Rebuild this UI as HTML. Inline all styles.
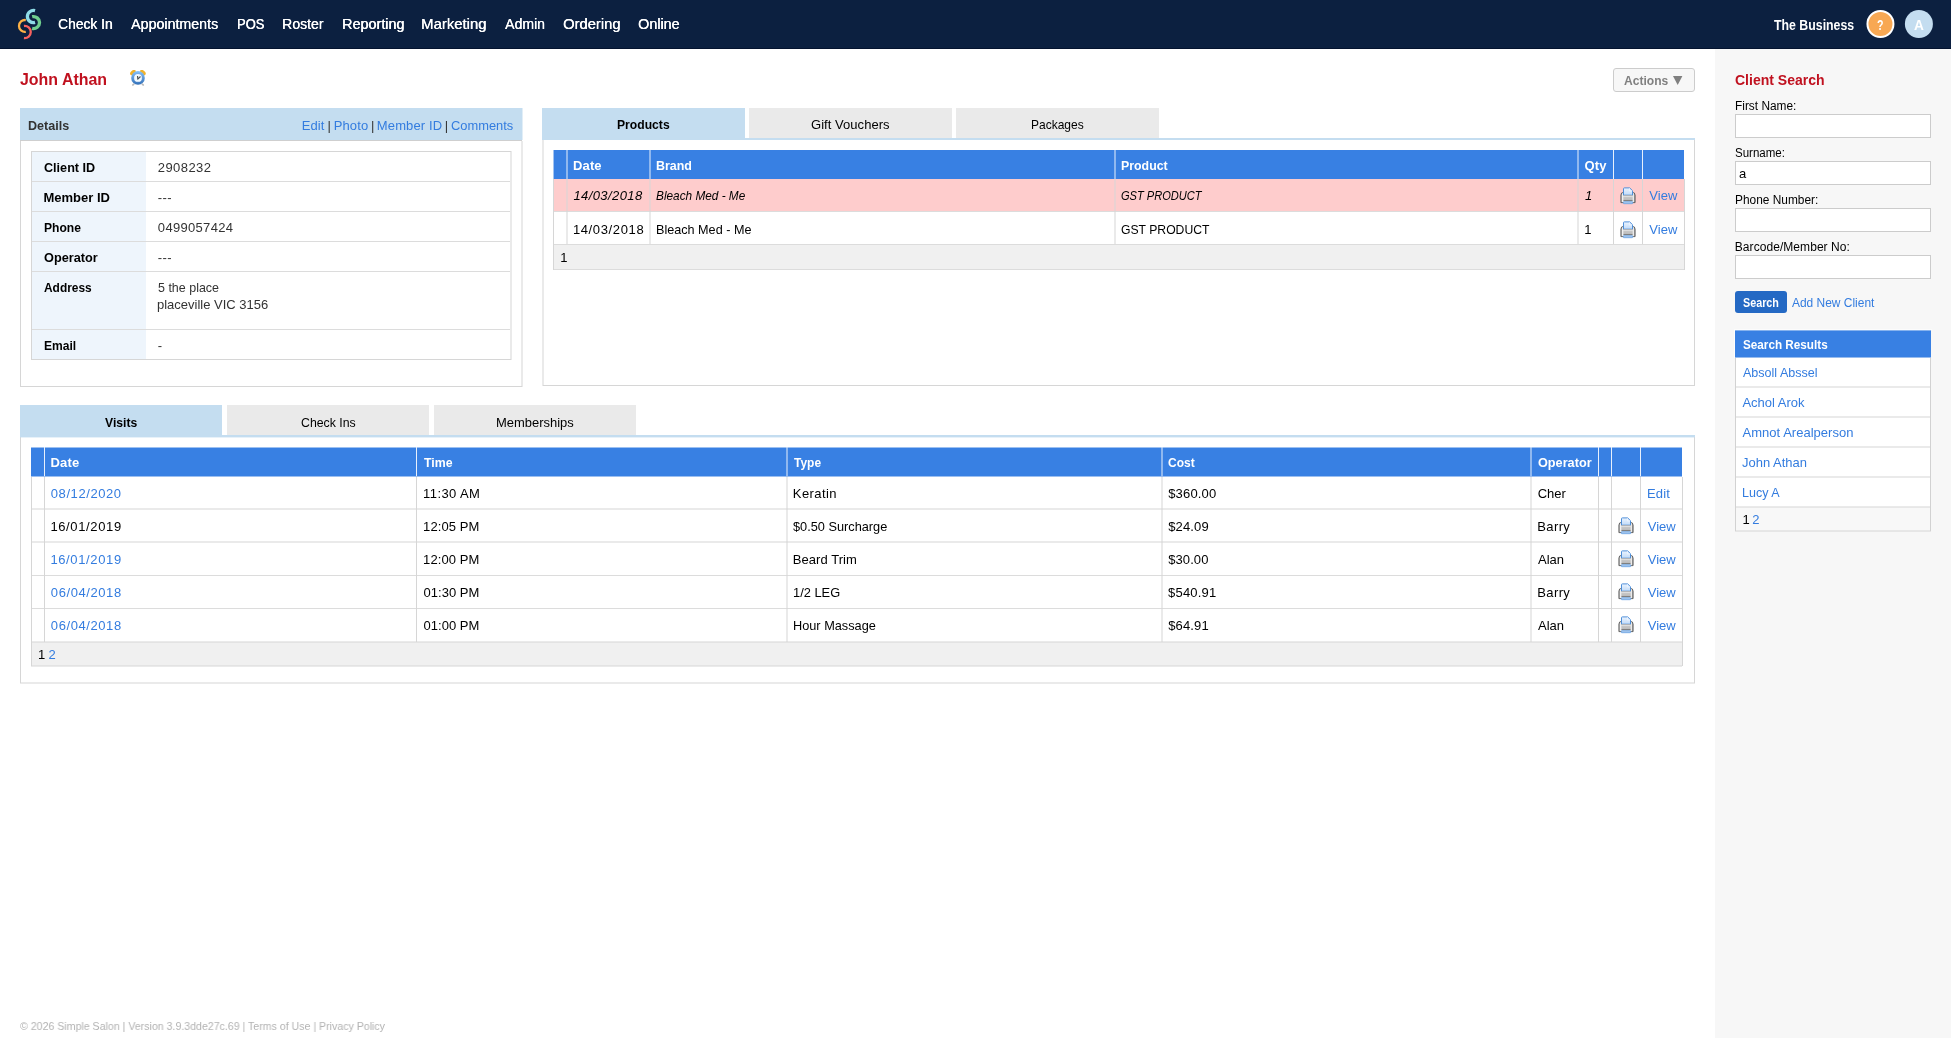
<!DOCTYPE html>
<html><head><meta charset="utf-8"><title>Client</title>
<style>
html,body{margin:0;padding:0;background:#fff;}
body{width:1951px;height:1038px;position:relative;overflow:hidden;font-family:"Liberation Sans",sans-serif;}
#w{position:absolute;left:0;top:0;width:1951px;height:1038px;will-change:transform;}
#w>div,#w>span,#w>svg{position:absolute;box-sizing:content-box;}
#w>span{white-space:nowrap;line-height:20px;transform-origin:0 0;}

</style></head><body><div id="w">
<div style="left:0px;top:0px;width:1951px;height:48px;background:#0c2040;"></div>
<div style="left:0px;top:48px;width:1951px;height:1px;background:#04132f;"></div>
<svg style="left:10px;top:4px" width="40" height="40" viewBox="0 0 40 40" fill="none">
<path d="M25.04 6.62 A6.1 6.1 0 1 0 25.04 18.42" stroke="#8fdce7" stroke-width="3.3"/>
<path d="M22.16 12.73 A6 6 0 1 1 22.16 24.41" stroke="#70cf8f" stroke-width="3.3"/>
<path d="M15.8 16.06 A5.97 5.97 0 1 0 15.8 27.88" stroke="#fcb146" stroke-width="2.3"/>
<path d="M13.95 22.0 A6.05 6.05 0 1 1 13.95 34.0" stroke="#f8615f" stroke-width="2.3"/>
</svg>
<span style="left:57.96px;top:14px;font-size:15px;color:#fff;transform:scaleX(0.9208);text-shadow:0.35px 0 0 #fff;">Check In</span>
<span style="left:130.92px;top:14px;font-size:15px;color:#fff;transform:scaleX(0.9487);text-shadow:0.35px 0 0 #fff;">Appointments</span>
<span style="left:236.60px;top:14px;font-size:15px;color:#fff;transform:scaleX(0.8589);text-shadow:0.35px 0 0 #fff;">POS</span>
<span style="left:282.08px;top:14px;font-size:15px;color:#fff;transform:scaleX(0.9350);text-shadow:0.35px 0 0 #fff;">Roster</span>
<span style="left:341.50px;top:14px;font-size:15px;color:#fff;transform:scaleX(0.9578);text-shadow:0.35px 0 0 #fff;">Reporting</span>
<span style="left:421.27px;top:14px;font-size:15px;color:#fff;transform:scaleX(0.9924);text-shadow:0.35px 0 0 #fff;">Marketing</span>
<span style="left:505.11px;top:14px;font-size:15px;color:#fff;transform:scaleX(0.9372);text-shadow:0.35px 0 0 #fff;">Admin</span>
<span style="left:562.94px;top:14px;font-size:15px;color:#fff;transform:scaleX(0.9823);text-shadow:0.35px 0 0 #fff;">Ordering</span>
<span style="left:638.14px;top:14px;font-size:15px;color:#fff;transform:scaleX(0.9568);text-shadow:0.35px 0 0 #fff;">Online</span>
<span style="left:1773.76px;top:15px;font-size:15px;color:#fff;font-weight:bold;transform:scaleX(0.8222);">The Business</span>
<svg style="left:1860px;top:4px" width="80" height="40" viewBox="0 0 80 40"><circle cx="20.45" cy="20" r="13" fill="#f8a853" stroke="#fff" stroke-width="2"/><circle cx="58.9" cy="20" r="14" fill="#c4ddf0"/></svg>
<span style="left:1876.74px;top:15px;font-size:15px;color:#fff;font-weight:bold;transform:scaleX(0.7101);">?</span>
<span style="left:1913.93px;top:15px;font-size:15px;color:#fff;font-weight:bold;transform:scaleX(0.9106);">A</span>
<div style="left:1715px;top:49px;width:236px;height:989px;background:#f7f7f7;"></div>
<span style="left:20.21px;top:70px;font-size:17px;color:#c0111f;font-weight:bold;transform:scaleX(0.9373);">John Athan</span>
<svg style="left:130px;top:70px" width="16" height="16" viewBox="0 0 16 16">
<defs><linearGradient id="cg" x1="0" y1="0" x2="0" y2="1"><stop offset="0" stop-color="#86c2fa"/><stop offset="1" stop-color="#3270b8"/></linearGradient></defs>
<ellipse cx="2.9" cy="2.5" rx="3.3" ry="2" transform="rotate(-42 2.9 2.5)" fill="#f0b22c"/>
<ellipse cx="12.9" cy="2.5" rx="3.3" ry="2" transform="rotate(42 12.9 2.5)" fill="#f0b22c"/>
<ellipse cx="3.3" cy="14.6" rx="1.5" ry="0.9" transform="rotate(-40 3.3 14.6)" fill="#b9b9b9"/>
<ellipse cx="12.8" cy="14.6" rx="1.5" ry="0.9" transform="rotate(40 12.8 14.6)" fill="#b9b9b9"/>
<circle cx="8" cy="7.9" r="6.8" fill="url(#cg)"/>
<circle cx="8" cy="7.9" r="4.4" fill="#7f9bd8" opacity="0.55"/>
<circle cx="8" cy="7.9" r="3.9" fill="#f1faff"/>
<path d="M7.55 6.0 L7.8 9.2 L10.5 6.5" stroke="#4d5256" stroke-width="1.15" fill="none" stroke-linejoin="round"/>
</svg>
<div style="left:1613px;top:68px;width:80px;height:22px;border:1px solid #ccc;border-radius:3px;background:#f7f7f7;"></div>
<span style="left:1624.08px;top:71px;font-size:13px;color:#808080;font-weight:bold;transform:scaleX(0.9298);">Actions</span>
<svg style="left:1673px;top:76px" width="10" height="10" viewBox="0 0 10 10"><path d="M0 0 H9.4 L4.7 9 Z" fill="#808080"/></svg>
<div style="left:20px;top:141px;width:1px;height:246px;background:#d6d6d6;"></div>
<div style="left:521px;top:141px;width:2px;height:246px;background:#d6d6d6;opacity:0.5;"></div>
<div style="left:20px;top:386px;width:502px;height:1px;background:#d6d6d6;"></div>
<div style="left:20px;top:108px;width:502px;height:32px;background:#c4ddf0;"></div>
<div style="left:522px;top:108px;width:1px;height:32px;background:#c4ddf0;opacity:0.5;"></div>
<div style="left:20px;top:140px;width:502px;height:1px;background:#cfcfcf;"></div>
<span style="left:27.61px;top:116px;font-size:13px;color:#333;font-weight:bold;transform:scaleX(0.9666);">Details</span>
<span style="left:301.67px;top:116px;font-size:13px;color:#337cdf;letter-spacing:0.088px;">Edit</span>
<span style="left:327.56px;top:116px;font-size:13px;color:#333;">|</span>
<span style="left:333.67px;top:116px;font-size:13px;color:#337cdf;letter-spacing:0.151px;">Photo</span>
<span style="left:371.01px;top:116px;font-size:13px;color:#333;">|</span>
<span style="left:376.84px;top:116px;font-size:13px;color:#337cdf;letter-spacing:0.134px;">Member ID</span>
<span style="left:444.84px;top:116px;font-size:13px;color:#333;">|</span>
<span style="left:451.28px;top:116px;font-size:13px;color:#337cdf;transform:scaleX(0.9906);">Comments</span>
<div style="left:31px;top:151px;width:480px;height:1px;background:#d6d6d6;"></div>
<div style="left:31px;top:359px;width:480px;height:1px;background:#d6d6d6;"></div>
<div style="left:31px;top:151px;width:1px;height:209px;background:#d6d6d6;"></div>
<div style="left:510px;top:151px;width:2px;height:209px;background:#d6d6d6;opacity:0.5;"></div>
<div style="left:32px;top:152px;width:114px;height:207px;background:#eef5fc;"></div>
<div style="left:32px;top:181px;width:478px;height:1px;background:#dcdcdc;"></div>
<div style="left:32px;top:211px;width:478px;height:1px;background:#dcdcdc;"></div>
<div style="left:32px;top:241px;width:478px;height:1px;background:#dcdcdc;"></div>
<div style="left:32px;top:271px;width:478px;height:1px;background:#dcdcdc;"></div>
<div style="left:32px;top:329px;width:478px;height:1px;background:#dcdcdc;"></div>
<span style="left:43.75px;top:158px;font-size:13px;color:#000;font-weight:bold;transform:scaleX(0.9705);">Client ID</span>
<span style="left:157.80px;top:158px;font-size:13px;color:#333;letter-spacing:0.420px;">2908232</span>
<span style="left:43.43px;top:188px;font-size:13px;color:#000;font-weight:bold;letter-spacing:0.016px;">Member ID</span>
<span style="left:157.77px;top:188px;font-size:13px;color:#333;letter-spacing:0.466px;">---</span>
<span style="left:43.83px;top:218px;font-size:13px;color:#000;font-weight:bold;transform:scaleX(0.9307);">Phone</span>
<span style="left:157.87px;top:218px;font-size:13px;color:#333;letter-spacing:0.312px;">0499057424</span>
<span style="left:43.83px;top:248px;font-size:13px;color:#000;font-weight:bold;transform:scaleX(0.9790);">Operator</span>
<span style="left:157.77px;top:248px;font-size:13px;color:#333;letter-spacing:0.466px;">---</span>
<span style="left:44.26px;top:278px;font-size:13px;color:#000;font-weight:bold;transform:scaleX(0.9170);">Address</span>
<span style="left:157.93px;top:278px;font-size:13px;color:#333;transform:scaleX(0.9593);">5 the place</span>
<span style="left:43.69px;top:336px;font-size:13px;color:#000;font-weight:bold;transform:scaleX(0.9286);">Email</span>
<span style="left:157.86px;top:336px;font-size:13px;color:#333;">-</span>
<span style="left:157.28px;top:295px;font-size:13px;color:#333;transform:scaleX(0.9989);">placeville VIC 3156</span>
<div style="left:542px;top:140px;width:2px;height:246px;background:#d6d6d6;opacity:0.5;"></div>
<div style="left:1694px;top:140px;width:1px;height:246px;background:#d6d6d6;"></div>
<div style="left:543px;top:385px;width:1152px;height:1px;background:#d6d6d6;"></div>
<div style="left:542px;top:108px;width:203px;height:32px;background:#c4ddf0;"></div>
<span style="left:616.92px;top:115px;font-size:13px;color:#000;font-weight:bold;transform:scaleX(0.9344);">Products</span>
<div style="left:749px;top:108px;width:203px;height:30px;background:#eaeaea;"></div>
<span style="left:811.04px;top:115px;font-size:13px;color:#000;letter-spacing:0.040px;">Gift Vouchers</span>
<div style="left:956px;top:108px;width:203px;height:30px;background:#eaeaea;"></div>
<span style="left:1030.58px;top:115px;font-size:13px;color:#000;transform:scaleX(0.9236);">Packages</span>
<div style="left:542px;top:138px;width:1153px;height:2px;background:#c4ddf0;"></div>
<svg width="0" height="0" style="left:0;top:0"><defs>
<linearGradient id="pg" x1="0" y1="0" x2="1" y2="0"><stop offset="0" stop-color="#9a9a9a"/><stop offset="0.12" stop-color="#f6f6f6"/><stop offset="0.3" stop-color="#c9c9c9"/><stop offset="0.7" stop-color="#c4c4c4"/><stop offset="0.88" stop-color="#f2f2f2"/><stop offset="1" stop-color="#7a7a7a"/></linearGradient>
<linearGradient id="pp" x1="0" y1="0" x2="0" y2="1"><stop offset="0" stop-color="#eaf3fe"/><stop offset="1" stop-color="#c2dbf8"/></linearGradient>
<linearGradient id="pt" x1="0" y1="0" x2="0" y2="1"><stop offset="0" stop-color="#9c9c9c"/><stop offset="0.18" stop-color="#e4e4e4"/><stop offset="0.35" stop-color="#c6c6c6"/><stop offset="0.7" stop-color="#bdbdbd"/><stop offset="0.85" stop-color="#7d7d7d"/><stop offset="1" stop-color="#efefef"/></linearGradient>
</defs></svg>
<div style="left:553px;top:150px;width:1131px;height:29px;background:#3880e3;"></div>
<div style="left:553px;top:150px;width:1px;height:29px;background:#e8f0fc;opacity:0.6;"></div>
<div style="left:566px;top:150px;width:2px;height:29px;background:#e8f0fc;opacity:0.5;"></div>
<div style="left:649px;top:150px;width:2px;height:29px;background:#e8f0fc;opacity:0.5;"></div>
<div style="left:1114px;top:150px;width:2px;height:29px;background:#e8f0fc;opacity:0.5;"></div>
<div style="left:1577px;top:150px;width:2px;height:29px;background:#e8f0fc;opacity:0.5;"></div>
<div style="left:1613px;top:150px;width:1px;height:29px;background:#e8f0fc;"></div>
<div style="left:1642px;top:150px;width:1px;height:29px;background:#e8f0fc;"></div>
<div style="left:553px;top:179px;width:1131px;height:32px;background:#fecccc;"></div>
<div style="left:553px;top:245px;width:1131px;height:24px;background:#f0f0f0;"></div>
<div style="left:553px;top:211px;width:1131px;height:1px;background:#dcdcdc;"></div>
<div style="left:553px;top:244px;width:1131px;height:1px;background:#dcdcdc;"></div>
<div style="left:553px;top:269px;width:1131px;height:1px;background:#dcdcdc;"></div>
<div style="left:566px;top:179px;width:2px;height:65px;background:#d6d6d6;opacity:0.5;"></div>
<div style="left:649px;top:179px;width:2px;height:65px;background:#d6d6d6;opacity:0.5;"></div>
<div style="left:1114px;top:179px;width:2px;height:65px;background:#d6d6d6;opacity:0.5;"></div>
<div style="left:1577px;top:179px;width:2px;height:65px;background:#d6d6d6;opacity:0.5;"></div>
<div style="left:1613px;top:179px;width:1px;height:65px;background:#d6d6d6;"></div>
<div style="left:1642px;top:179px;width:1px;height:65px;background:#d6d6d6;"></div>
<div style="left:553px;top:179px;width:1px;height:91px;background:#d6d6d6;"></div>
<div style="left:1684px;top:179px;width:1px;height:91px;background:#d6d6d6;"></div>
<span style="left:573.12px;top:156px;font-size:13px;color:#fff;font-weight:bold;letter-spacing:0.076px;">Date</span>
<span style="left:655.79px;top:156px;font-size:13px;color:#fff;font-weight:bold;transform:scaleX(0.9580);">Brand</span>
<span style="left:1120.84px;top:156px;font-size:13px;color:#fff;font-weight:bold;transform:scaleX(0.9504);">Product</span>
<span style="left:1584.53px;top:156px;font-size:13px;color:#fff;font-weight:bold;letter-spacing:0.124px;">Qty</span>
<span style="left:573.45px;top:186px;font-size:13px;color:#000;font-style:italic;letter-spacing:0.406px;">14/03/2018</span>
<span style="left:656.03px;top:186px;font-size:13px;color:#000;font-style:italic;transform:scaleX(0.9083);">Bleach Med - Me</span>
<span style="left:1121.07px;top:186px;font-size:13px;color:#000;font-style:italic;transform:scaleX(0.8516);">GST PRODUCT</span>
<span style="left:1584.98px;top:186px;font-size:13px;color:#000;font-style:italic;">1</span>
<svg style="left:1620px;top:187.5px;overflow:visible" width="16" height="16" viewBox="0 0 16 16">
<path d="M0.9 14.6 V7.2 Q0.9 4.3 3.7 4.3 H12.3 Q15.1 4.3 15.1 7.2 V14.6 Z" fill="url(#pg)" stroke="#4c4c4c" stroke-width="0.8"/>
<path d="M3.5 7.2 V0.7 Q3.5 -0.1 4.3 -0.1 H9.7 L12.5 2.7 V7.2 Z" fill="url(#pp)" stroke="#4f8fd9" stroke-width="1" stroke-linejoin="round"/>
<path d="M9.4 0.3 V3.0 H12.1" fill="none" stroke="#eef5ff" stroke-width="0.8"/>
<rect x="3.4" y="7.1" width="9.2" height="6.4" fill="url(#pt)"/>
<rect x="3.3" y="13.7" width="9.4" height="2" rx="0.5" fill="#a9c9ee" stroke="#5d9ce2" stroke-width="0.7"/>
</svg>
<span style="left:1649.26px;top:186px;font-size:13px;color:#337cdf;letter-spacing:0.066px;">View</span>
<span style="left:572.91px;top:220px;font-size:13px;color:#000;letter-spacing:0.628px;">14/03/2018</span>
<span style="left:655.64px;top:220px;font-size:13px;color:#000;transform:scaleX(0.9710);">Bleach Med - Me</span>
<span style="left:1121.12px;top:220px;font-size:13px;color:#000;transform:scaleX(0.9372);">GST PRODUCT</span>
<span style="left:1584.26px;top:220px;font-size:13px;color:#000;">1</span>
<svg style="left:1620px;top:221.5px;overflow:visible" width="16" height="16" viewBox="0 0 16 16">
<path d="M0.9 14.6 V7.2 Q0.9 4.3 3.7 4.3 H12.3 Q15.1 4.3 15.1 7.2 V14.6 Z" fill="url(#pg)" stroke="#4c4c4c" stroke-width="0.8"/>
<path d="M3.5 7.2 V0.7 Q3.5 -0.1 4.3 -0.1 H9.7 L12.5 2.7 V7.2 Z" fill="url(#pp)" stroke="#4f8fd9" stroke-width="1" stroke-linejoin="round"/>
<path d="M9.4 0.3 V3.0 H12.1" fill="none" stroke="#eef5ff" stroke-width="0.8"/>
<rect x="3.4" y="7.1" width="9.2" height="6.4" fill="url(#pt)"/>
<rect x="3.3" y="13.7" width="9.4" height="2" rx="0.5" fill="#a9c9ee" stroke="#5d9ce2" stroke-width="0.7"/>
</svg>
<span style="left:1649.26px;top:220px;font-size:13px;color:#337cdf;letter-spacing:0.066px;">View</span>
<span style="left:560.26px;top:248px;font-size:13px;color:#000;">1</span>
<div style="left:20px;top:437px;width:1px;height:246px;background:#d6d6d6;"></div>
<div style="left:1694px;top:437px;width:1px;height:246px;background:#d6d6d6;"></div>
<div style="left:20px;top:682px;width:1675px;height:2px;background:#d6d6d6;opacity:0.5;"></div>
<div style="left:20px;top:405px;width:202px;height:32px;background:#c4ddf0;"></div>
<span style="left:105.41px;top:413px;font-size:13px;color:#000;font-weight:bold;transform:scaleX(0.9360);">Visits</span>
<div style="left:227px;top:405px;width:202px;height:30px;background:#eaeaea;"></div>
<span style="left:300.82px;top:413px;font-size:13px;color:#000;transform:scaleX(0.9461);">Check Ins</span>
<div style="left:434px;top:405px;width:202px;height:30px;background:#eaeaea;"></div>
<span style="left:495.85px;top:413px;font-size:13px;color:#000;transform:scaleX(0.9969);">Memberships</span>
<div style="left:20px;top:435px;width:1675px;height:2px;background:#c4ddf0;"></div>
<div style="left:20px;top:437px;width:1675px;height:1px;background:#c4ddf0;opacity:0.4;"></div>
<div style="left:31px;top:447px;width:1651px;height:29px;background:#3880e3;"></div>
<div style="left:31px;top:447px;width:1651px;height:1px;background:#fff;opacity:0.5;"></div>
<div style="left:31px;top:476px;width:1651px;height:1px;background:#3880e3;opacity:0.5;"></div>
<div style="left:44px;top:447px;width:1px;height:29px;background:#e8f0fc;"></div>
<div style="left:416px;top:447px;width:1px;height:29px;background:#e8f0fc;"></div>
<div style="left:786px;top:447px;width:2px;height:29px;background:#e8f0fc;opacity:0.5;"></div>
<div style="left:1161px;top:447px;width:2px;height:29px;background:#e8f0fc;opacity:0.5;"></div>
<div style="left:1530px;top:447px;width:2px;height:29px;background:#e8f0fc;opacity:0.5;"></div>
<div style="left:1598px;top:447px;width:1px;height:29px;background:#e8f0fc;"></div>
<div style="left:1611px;top:447px;width:1px;height:29px;background:#e8f0fc;"></div>
<div style="left:1640px;top:447px;width:1px;height:29px;background:#e8f0fc;"></div>
<div style="left:31px;top:642px;width:1651px;height:24px;background:#f0f0f0;"></div>
<div style="left:31px;top:508px;width:1651px;height:2px;background:#d6d6d6;opacity:0.5;"></div>
<div style="left:31px;top:541px;width:1651px;height:2px;background:#d6d6d6;opacity:0.5;"></div>
<div style="left:31px;top:575px;width:1651px;height:1px;background:#dcdcdc;"></div>
<div style="left:31px;top:608px;width:1651px;height:1px;background:#dcdcdc;"></div>
<div style="left:31px;top:641px;width:1651px;height:2px;background:#d6d6d6;opacity:0.5;"></div>
<div style="left:31px;top:665px;width:1651px;height:2px;background:#d6d6d6;opacity:0.5;"></div>
<div style="left:44px;top:477px;width:1px;height:165px;background:#d6d6d6;"></div>
<div style="left:416px;top:477px;width:1px;height:165px;background:#d6d6d6;"></div>
<div style="left:786px;top:477px;width:2px;height:165px;background:#d6d6d6;opacity:0.5;"></div>
<div style="left:1161px;top:477px;width:2px;height:165px;background:#d6d6d6;opacity:0.5;"></div>
<div style="left:1530px;top:477px;width:2px;height:165px;background:#d6d6d6;opacity:0.5;"></div>
<div style="left:1598px;top:477px;width:1px;height:165px;background:#d6d6d6;"></div>
<div style="left:1611px;top:477px;width:1px;height:165px;background:#d6d6d6;"></div>
<div style="left:1640px;top:477px;width:1px;height:165px;background:#d6d6d6;"></div>
<div style="left:31px;top:477px;width:1px;height:189px;background:#d6d6d6;"></div>
<div style="left:1682px;top:477px;width:1px;height:189px;background:#d6d6d6;"></div>
<span style="left:50.56px;top:453px;font-size:13px;color:#fff;font-weight:bold;letter-spacing:0.146px;">Date</span>
<span style="left:423.99px;top:453px;font-size:13px;color:#fff;font-weight:bold;transform:scaleX(0.9483);">Time</span>
<span style="left:793.56px;top:453px;font-size:13px;color:#fff;font-weight:bold;transform:scaleX(0.9203);">Type</span>
<span style="left:1168.36px;top:453px;font-size:13px;color:#fff;font-weight:bold;transform:scaleX(0.9236);">Cost</span>
<span style="left:1537.95px;top:453px;font-size:13px;color:#fff;font-weight:bold;transform:scaleX(0.9763);">Operator</span>
<span style="left:50.80px;top:484px;font-size:13px;color:#337cdf;letter-spacing:0.582px;">08/12/2020</span>
<span style="left:423.09px;top:484px;font-size:13px;color:#000;letter-spacing:0.411px;">11:30 AM</span>
<span style="left:792.83px;top:484px;font-size:13px;color:#000;letter-spacing:0.399px;">Keratin</span>
<span style="left:1168.14px;top:484px;font-size:13px;color:#000;letter-spacing:0.193px;">$360.00</span>
<span style="left:1537.63px;top:484px;font-size:13px;color:#000;letter-spacing:0.032px;">Cher</span>
<span style="left:1646.98px;top:484px;font-size:13px;color:#337cdf;letter-spacing:0.181px;">Edit</span>
<span style="left:50.40px;top:517px;font-size:13px;color:#000;letter-spacing:0.636px;">16/01/2019</span>
<span style="left:423.12px;top:517px;font-size:13px;color:#000;letter-spacing:0.066px;">12:05 PM</span>
<span style="left:793.47px;top:517px;font-size:13px;color:#000;transform:scaleX(0.9803);">$0.50 Surcharge</span>
<span style="left:1168.14px;top:517px;font-size:13px;color:#000;letter-spacing:0.150px;">$24.09</span>
<span style="left:1537.28px;top:517px;font-size:13px;color:#000;letter-spacing:0.382px;">Barry</span>
<svg style="left:1618px;top:517.5px;overflow:visible" width="16" height="16" viewBox="0 0 16 16">
<path d="M0.9 14.6 V7.2 Q0.9 4.3 3.7 4.3 H12.3 Q15.1 4.3 15.1 7.2 V14.6 Z" fill="url(#pg)" stroke="#4c4c4c" stroke-width="0.8"/>
<path d="M3.5 7.2 V0.7 Q3.5 -0.1 4.3 -0.1 H9.7 L12.5 2.7 V7.2 Z" fill="url(#pp)" stroke="#4f8fd9" stroke-width="1" stroke-linejoin="round"/>
<path d="M9.4 0.3 V3.0 H12.1" fill="none" stroke="#eef5ff" stroke-width="0.8"/>
<rect x="3.4" y="7.1" width="9.2" height="6.4" fill="url(#pt)"/>
<rect x="3.3" y="13.7" width="9.4" height="2" rx="0.5" fill="#a9c9ee" stroke="#5d9ce2" stroke-width="0.7"/>
</svg>
<span style="left:1647.75px;top:517px;font-size:13px;color:#337cdf;transform:scaleX(1.0000);">View</span>
<span style="left:50.40px;top:550px;font-size:13px;color:#337cdf;letter-spacing:0.636px;">16/01/2019</span>
<span style="left:423.12px;top:550px;font-size:13px;color:#000;letter-spacing:0.066px;">12:00 PM</span>
<span style="left:792.84px;top:550px;font-size:13px;color:#000;letter-spacing:0.052px;">Beard Trim</span>
<span style="left:1168.15px;top:550px;font-size:13px;color:#000;letter-spacing:0.103px;">$30.00</span>
<span style="left:1538.04px;top:550px;font-size:13px;color:#000;letter-spacing:0.013px;">Alan</span>
<svg style="left:1618px;top:550.5px;overflow:visible" width="16" height="16" viewBox="0 0 16 16">
<path d="M0.9 14.6 V7.2 Q0.9 4.3 3.7 4.3 H12.3 Q15.1 4.3 15.1 7.2 V14.6 Z" fill="url(#pg)" stroke="#4c4c4c" stroke-width="0.8"/>
<path d="M3.5 7.2 V0.7 Q3.5 -0.1 4.3 -0.1 H9.7 L12.5 2.7 V7.2 Z" fill="url(#pp)" stroke="#4f8fd9" stroke-width="1" stroke-linejoin="round"/>
<path d="M9.4 0.3 V3.0 H12.1" fill="none" stroke="#eef5ff" stroke-width="0.8"/>
<rect x="3.4" y="7.1" width="9.2" height="6.4" fill="url(#pt)"/>
<rect x="3.3" y="13.7" width="9.4" height="2" rx="0.5" fill="#a9c9ee" stroke="#5d9ce2" stroke-width="0.7"/>
</svg>
<span style="left:1647.75px;top:550px;font-size:13px;color:#337cdf;transform:scaleX(1.0000);">View</span>
<span style="left:50.84px;top:583px;font-size:13px;color:#337cdf;letter-spacing:0.580px;">06/04/2018</span>
<span style="left:423.60px;top:583px;font-size:13px;color:#000;letter-spacing:0.020px;">01:30 PM</span>
<span style="left:792.64px;top:583px;font-size:13px;color:#000;transform:scaleX(0.9879);">1/2 LEG</span>
<span style="left:1168.09px;top:583px;font-size:13px;color:#000;letter-spacing:0.190px;">$540.91</span>
<span style="left:1537.28px;top:583px;font-size:13px;color:#000;letter-spacing:0.382px;">Barry</span>
<svg style="left:1618px;top:583.5px;overflow:visible" width="16" height="16" viewBox="0 0 16 16">
<path d="M0.9 14.6 V7.2 Q0.9 4.3 3.7 4.3 H12.3 Q15.1 4.3 15.1 7.2 V14.6 Z" fill="url(#pg)" stroke="#4c4c4c" stroke-width="0.8"/>
<path d="M3.5 7.2 V0.7 Q3.5 -0.1 4.3 -0.1 H9.7 L12.5 2.7 V7.2 Z" fill="url(#pp)" stroke="#4f8fd9" stroke-width="1" stroke-linejoin="round"/>
<path d="M9.4 0.3 V3.0 H12.1" fill="none" stroke="#eef5ff" stroke-width="0.8"/>
<rect x="3.4" y="7.1" width="9.2" height="6.4" fill="url(#pt)"/>
<rect x="3.3" y="13.7" width="9.4" height="2" rx="0.5" fill="#a9c9ee" stroke="#5d9ce2" stroke-width="0.7"/>
</svg>
<span style="left:1647.75px;top:583px;font-size:13px;color:#337cdf;transform:scaleX(1.0000);">View</span>
<span style="left:50.84px;top:616px;font-size:13px;color:#337cdf;letter-spacing:0.580px;">06/04/2018</span>
<span style="left:423.60px;top:616px;font-size:13px;color:#000;letter-spacing:0.020px;">01:00 PM</span>
<span style="left:792.70px;top:616px;font-size:13px;color:#000;transform:scaleX(0.9800);">Hour Massage</span>
<span style="left:1168.14px;top:616px;font-size:13px;color:#000;letter-spacing:0.151px;">$64.91</span>
<span style="left:1538.04px;top:616px;font-size:13px;color:#000;letter-spacing:0.013px;">Alan</span>
<svg style="left:1618px;top:616.5px;overflow:visible" width="16" height="16" viewBox="0 0 16 16">
<path d="M0.9 14.6 V7.2 Q0.9 4.3 3.7 4.3 H12.3 Q15.1 4.3 15.1 7.2 V14.6 Z" fill="url(#pg)" stroke="#4c4c4c" stroke-width="0.8"/>
<path d="M3.5 7.2 V0.7 Q3.5 -0.1 4.3 -0.1 H9.7 L12.5 2.7 V7.2 Z" fill="url(#pp)" stroke="#4f8fd9" stroke-width="1" stroke-linejoin="round"/>
<path d="M9.4 0.3 V3.0 H12.1" fill="none" stroke="#eef5ff" stroke-width="0.8"/>
<rect x="3.4" y="7.1" width="9.2" height="6.4" fill="url(#pt)"/>
<rect x="3.3" y="13.7" width="9.4" height="2" rx="0.5" fill="#a9c9ee" stroke="#5d9ce2" stroke-width="0.7"/>
</svg>
<span style="left:1647.75px;top:616px;font-size:13px;color:#337cdf;transform:scaleX(1.0000);">View</span>
<span style="left:37.88px;top:645px;font-size:13px;color:#000;">1</span>
<span style="left:48.46px;top:645px;font-size:13px;color:#337cdf;">2</span>
<span style="left:1734.58px;top:70px;font-size:15px;color:#c0111f;font-weight:bold;transform:scaleX(0.9342);">Client Search</span>
<span style="left:1734.60px;top:96px;font-size:12px;color:#000;transform:scaleX(0.9894);">First Name:</span>
<div style="left:1735px;top:114px;width:194px;height:22px;border:1px solid #ccc;background:#fff;"></div>
<span style="left:1734.70px;top:143px;font-size:12px;color:#000;transform:scaleX(0.9605);">Surname:</span>
<div style="left:1735px;top:161px;width:194px;height:22px;border:1px solid #ccc;background:#fff;"></div>
<span style="left:1739.03px;top:164px;font-size:13px;color:#000;">a</span>
<span style="left:1734.96px;top:190px;font-size:12px;color:#000;transform:scaleX(0.9909);">Phone Number:</span>
<div style="left:1735px;top:208px;width:194px;height:22px;border:1px solid #ccc;background:#fff;"></div>
<span style="left:1734.82px;top:237px;font-size:12px;color:#000;letter-spacing:0.058px;">Barcode/Member No:</span>
<div style="left:1735px;top:255px;width:194px;height:22px;border:1px solid #ccc;background:#fff;"></div>
<div style="left:1735px;top:291px;width:52px;height:22px;border-radius:3px;background:#2469c4;"></div>
<span style="left:1742.61px;top:293px;font-size:12px;color:#fff;font-weight:bold;transform:scaleX(0.8974);">Search</span>
<span style="left:1792.14px;top:293px;font-size:12px;color:#337cdf;transform:scaleX(0.9960);">Add New Client</span>
<div style="left:1734px;top:329px;width:198px;height:1px;background:#fff;opacity:0.6;"></div>
<div style="left:1734px;top:330px;width:1px;height:28px;background:#fff;opacity:0.8;"></div>
<div style="left:1735px;top:330px;width:196px;height:27px;background:#3880e3;"></div>
<div style="left:1735px;top:330px;width:196px;height:1px;background:#fff;opacity:0.4;"></div>
<div style="left:1735px;top:357px;width:196px;height:1px;background:#3880e3;opacity:0.5;"></div>
<span style="left:1742.69px;top:335px;font-size:13px;color:#fff;font-weight:bold;transform:scaleX(0.9017);">Search Results</span>
<div style="left:1735px;top:358px;width:196px;height:173px;background:#fff;"></div>
<div style="left:1735px;top:507px;width:196px;height:24px;background:#f8f8f8;"></div>
<span style="left:1742.62px;top:363px;font-size:13px;color:#337cdf;transform:scaleX(0.9645);">Absoll Abssel</span>
<div style="left:1735px;top:386px;width:196px;height:2px;background:#d6d6d6;opacity:0.5;"></div>
<span style="left:1742.39px;top:393px;font-size:13px;color:#337cdf;">Achol Arok</span>
<div style="left:1735px;top:416px;width:196px;height:2px;background:#d6d6d6;opacity:0.5;"></div>
<span style="left:1742.58px;top:423px;font-size:13px;color:#337cdf;letter-spacing:0.019px;">Amnot Arealperson</span>
<div style="left:1735px;top:446px;width:196px;height:2px;background:#d6d6d6;opacity:0.5;"></div>
<span style="left:1741.97px;top:453px;font-size:13px;color:#337cdf;transform:scaleX(0.9976);">John Athan</span>
<div style="left:1735px;top:476px;width:196px;height:2px;background:#d6d6d6;opacity:0.5;"></div>
<span style="left:1741.52px;top:483px;font-size:13px;color:#337cdf;transform:scaleX(0.9625);">Lucy A</span>
<div style="left:1735px;top:506px;width:196px;height:2px;background:#d6d6d6;opacity:0.5;"></div>
<div style="left:1735px;top:530px;width:196px;height:2px;background:#d6d6d6;opacity:0.5;"></div>
<div style="left:1735px;top:358px;width:1px;height:173px;background:#d2d2d2;"></div>
<div style="left:1930px;top:358px;width:1px;height:173px;background:#d2d2d2;"></div>
<span style="left:1742.40px;top:510px;font-size:13px;color:#000;">1</span>
<span style="left:1752.26px;top:510px;font-size:13px;color:#337cdf;">2</span>
<span style="left:20.17px;top:1016px;font-size:11px;color:#b3b3b3;transform:scaleX(0.9629);">© 2026 Simple Salon | Version 3.9.3dde27c.69 | Terms of Use | Privacy Policy</span>
</div></body></html>
